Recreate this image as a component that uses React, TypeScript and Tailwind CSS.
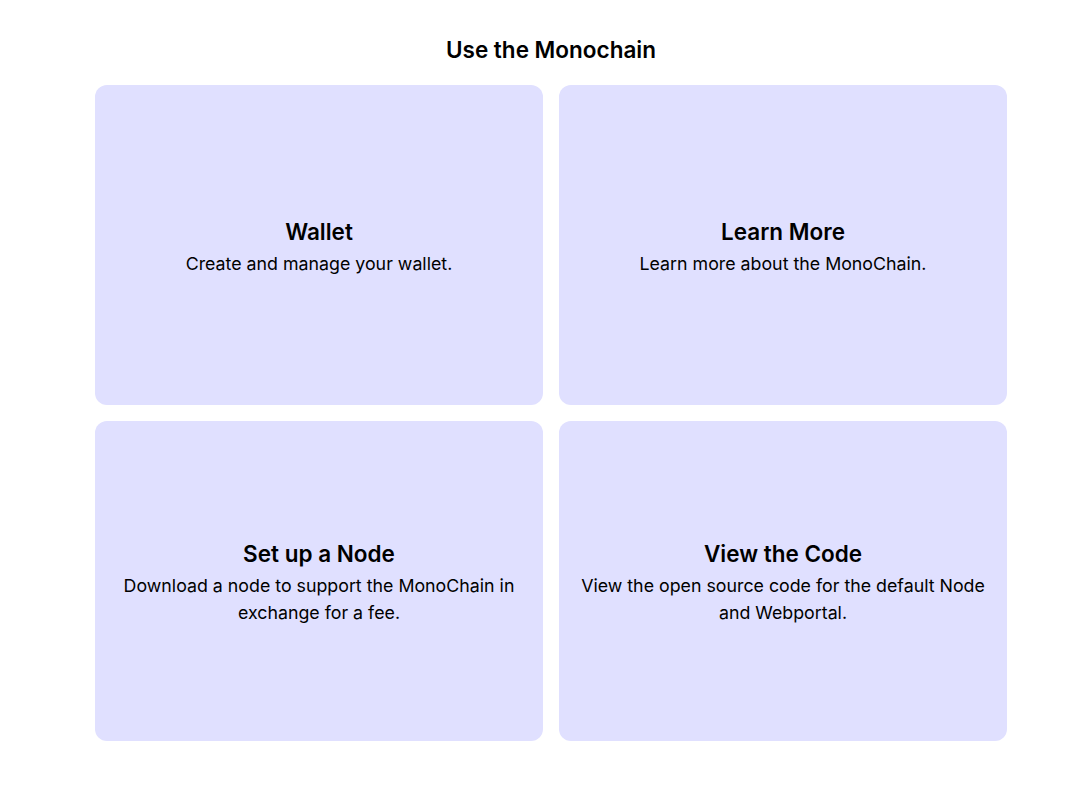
const cards = [
  { title: "Wallet", text: "Create and manage your wallet." },
  { title: "Learn More", text: "Learn more about the MonoChain." },
  { title: "Set up a Node", text: "Download a node to support the MonoChain in exchange for a fee." },
  { title: "View the Code", text: "View the open source code for the default Node and Webportal." },
];

export default function App() {
  return (
    <div
      className="min-h-screen bg-white text-black pl-[95px] pt-[35px]"
      style={{ fontFamily: "Inter, 'Noto Sans', sans-serif" }}
    >
      <div className="w-[912px]">
        <h1 className="text-center text-[22.5px] leading-[30px] font-semibold">Use the Monochain</h1>
        <div className="grid grid-cols-2 gap-4 mt-5">
          {cards.map((c) => (
            <div
              key={c.title}
              className="h-[320px] rounded-xl bg-[#e0e0ff] flex flex-col items-center justify-center text-center px-5"
            >
              <h2 className="text-[22.5px] leading-[36px] font-semibold">{c.title}</h2>
              <p className="text-[17.8px] leading-[27px]">{c.text}</p>
            </div>
          ))}
        </div>
      </div>
    </div>
  );
}
